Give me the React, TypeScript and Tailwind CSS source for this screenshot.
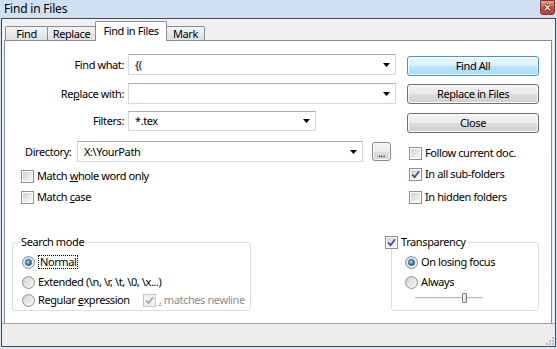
import React from "react";

function Box({ checked, disabled }: { checked?: boolean; disabled?: boolean }) {
  return (
    <div
      className={`w-[13px] h-[13px] shrink-0 border p-[1px] ${
        disabled ? "border-[#c5c5c5] bg-[#f4f4f4]" : "border-[#8e8f8f] bg-white"
      }`}
    >
      <div
        className={`relative w-full h-full ${
          disabled
            ? "bg-[#f0f0f0]"
            : "bg-[linear-gradient(135deg,#cbcfd5_0%,#e6e8eb_55%,#f7f7f7_100%)]"
        }`}
      >
        {checked && (
          <svg viewBox="0 0 9 9" className="absolute inset-0 w-full h-full">
            <path
              d="M1.2 4.6 L3.6 7.2 L8 1.2"
              fill="none"
              stroke={disabled ? "#a8a8a8" : "#3b4d8c"}
              strokeWidth="1.7"
            />
          </svg>
        )}
      </div>
    </div>
  );
}

function Radio({ checked }: { checked?: boolean }) {
  return (
    <div className="w-[13px] h-[13px] shrink-0 rounded-full border border-[#8e8f8f] bg-[linear-gradient(135deg,#cfd2d6,#f8f8f8)] flex items-center justify-center">
      {checked && (
        <div className="w-[7px] h-[7px] rounded-full bg-[radial-gradient(circle_at_35%_35%,#9fe0f8_0%,#3a8ac0_55%,#1b4f7a_100%)] border border-[#1f5380]" />
      )}
    </div>
  );
}

function Combo({ value, w }: { value?: string; w: string }) {
  return (
    <div
      className={`${w} h-full flex items-center justify-between bg-white border border-[#d5d9df] border-t-[#abadb3] pl-[6px] pr-[5px]`}
    >
      <span>{value}</span>
      <svg width="7" height="4" viewBox="0 0 7 4">
        <path d="M0 0 H7 L3.5 4 Z" fill="#000" />
      </svg>
    </div>
  );
}

function Btn({ children, primary }: { children: React.ReactNode; primary?: boolean }) {
  return (
    <div
      className={`w-[132px] h-[20px] rounded-[3px] border flex items-center justify-center shadow-[inset_0_0_0_1px_#fbfbfb] ${
        primary
          ? "border-[#3c98c9] bg-[linear-gradient(#eaf6fd_0%,#d9f0fc_50%,#bee6fd_50%,#a7d9f5_100%)]"
          : "border-[#707070] bg-[linear-gradient(#f2f2f2_0%,#ebebeb_50%,#dddddd_50%,#cfcfcf_100%)]"
      }`}
    >
      {children}
    </div>
  );
}

function Check({
  children,
  checked,
  className = "",
}: {
  children: React.ReactNode;
  checked?: boolean;
  className?: string;
}) {
  return (
    <div className={`h-[16px] flex items-center gap-[3px] whitespace-nowrap ${className}`}>
      <Box checked={checked} />
      <span>{children}</span>
    </div>
  );
}

function Tab({ children, active, w, className = "" }: { children: React.ReactNode; active?: boolean; w: string; className?: string }) {
  return (
    <div
      className={`${w} ${className} flex items-center justify-center border border-[#898c95] rounded-t-[2px] whitespace-nowrap ${
        active
          ? "h-[20px] -mb-[1px] border-b-0 bg-white relative z-10 pb-[1px]"
          : "h-[14px] border-b-0 bg-[linear-gradient(#f3f3f3,#e0e0e0)]"
      }`}
    >
      {children}
    </div>
  );
}

export default function App() {
  return (
    <div className="w-[557px] h-[349px] overflow-hidden bg-[linear-gradient(#d0e0f3,#dae6f5)] font-['Noto_Sans',sans-serif] text-[11px] leading-[14px] tracking-[-0.4px] text-black select-none">
      {/* Title bar */}
      <div className="h-[18px] flex items-start justify-between">
        <span className="pl-[4px] pt-[2px] text-[12px] tracking-[-0.2px]">Find in Files</span>
        <div className="mr-[2px] w-[15px] h-[15px] rounded-b-[3px] border border-[#7a3a30] bg-[linear-gradient(#e6a08f,#c9503b_55%,#b8442f)] flex items-center justify-center">
          <svg width="7" height="7" viewBox="0 0 7 7">
            <path d="M1 1 L6 6 M6 1 L1 6" stroke="#5a1a10" strokeWidth="2.6" />
            <path d="M1 1 L6 6 M6 1 L1 6" stroke="#fff" strokeWidth="1.4" />
          </svg>
        </div>
      </div>

      {/* Client area */}
      <div className="ml-[1px] w-[555px] h-[329px] border border-[#4a4a4a] bg-[#f0f0f0] flex flex-col">
        {/* Tabs */}
        <div className="h-[21px] ml-[2px] pl-[1px] flex items-end">
          <Tab w="w-[43px]">Find</Tab>
          <Tab w="w-[49px]" className="-ml-[1px]">Replace</Tab>
          <Tab w="w-[72px]" active className="-ml-[1px]">Find in Files</Tab>
          <Tab w="w-[39px]" className="-ml-[1px]">Mark</Tab>
        </div>

        {/* Tab page */}
        <div className="ml-[2px] w-[548px] h-[283px] border border-b-0 border-[#898c95] bg-white flex flex-col">
          <div className="flex">
            {/* Left column */}
            <div className="w-[395px] pt-[13px] flex flex-col">
              <div className="h-[21px] flex items-center">
                <span className="w-[119px] text-right mr-[4px]">Find what:</span>
                <Combo value="{(" w="w-[268px]" />
              </div>
              <div className="h-[21px] mt-[8px] flex items-center">
                <span className="w-[119px] text-right mr-[4px]">
                  Re<u>p</u>lace with:
                </span>
                <Combo w="w-[268px]" />
              </div>
              <div className="h-[20px] mt-[7px] flex items-center">
                <span className="w-[119px] text-right mr-[4px]">Filters:</span>
                <Combo value="*.tex" w="w-[188px]" />
              </div>
              <div className="h-[21px] mt-[10px] flex items-center">
                <span className="ml-[20px] w-[52px] whitespace-nowrap">Directory:</span>
                <Combo value="X:\YourPath" w="w-[286px]" />
                <div className="ml-[9px] w-[19px] h-[19px] rounded-[3px] border border-[#8a8a8a] bg-[linear-gradient(#f4f4f4_0%,#ececec_50%,#dedede_50%,#d2d2d2_100%)] shadow-[inset_0_0_0_1px_#fbfbfb] flex items-end justify-center pb-[4px] leading-[6px] text-[10px]">
                  ...
                </div>
              </div>
              <Check className="mt-[6px] ml-[16px]">
                Match <u>w</u>hole word only
              </Check>
              <Check className="mt-[5px] ml-[16px]">
                Match <u>c</u>ase
              </Check>
            </div>

            {/* Right column */}
            <div className="pt-[15px] pl-[7px] flex flex-col">
              <Btn primary>Find All</Btn>
              <div className="mt-[8px]">
                <Btn>Replace in Files</Btn>
              </div>
              <div className="mt-[9px]">
                <Btn>Close</Btn>
              </div>
              <Check className="mt-[12px] ml-[2px]">Follow current doc.</Check>
              <Check className="mt-[5px] ml-[2px]" checked>
                In all sub-folders
              </Check>
              <Check className="mt-[7px] ml-[2px]">In hidden folders</Check>
            </div>
          </div>

          {/* Group boxes */}
          <div className="mt-[30px] flex justify-between items-start whitespace-nowrap">
            <fieldset className="ml-[7px] w-[239px] min-w-0 border border-[#d5dfe5] rounded-[3px] px-[9px] pb-[1px]">
              <legend className="-ml-[2px] px-[1px] leading-[14px]">Search mode</legend>
              <div className="mt-[4px] h-[18px] flex items-center gap-[3px]">
                <Radio checked />
                <span className="border border-dotted border-black px-[1px] leading-[12px]">Normal</span>
              </div>
              <div className="mt-[2px] h-[18px] flex items-center gap-[3px]">
                <Radio />
                <span>Extended (\n, \r, \t, \0, \x...)</span>
              </div>
              <div className="h-[18px] w-[260px] flex items-center gap-[3px]">
                <Radio />
                <span>
                  Regular <u>e</u>xpression
                </span>
                <div className="ml-[10px] flex items-center gap-[3px] text-[#8d8d8d]">
                  <Box checked disabled />
                  <span>
                    <u>.</u> matches newline
                  </span>
                </div>
              </div>
            </fieldset>

            <fieldset className="mr-[12px] w-[148px] min-w-0 border border-[#d5dfe5] rounded-[3px] px-[13px] pb-[7px]">
              <legend className="-ml-[20px] px-0 flex items-center gap-[3px] h-[14px] bg-white pr-[2px]">
                <Box checked />
                <span>Transparency</span>
              </legend>
              <div className="mt-[4px] h-[18px] flex items-center gap-[3px]">
                <Radio checked />
                <span>On losing focus</span>
              </div>
              <div className="mt-[2px] h-[18px] flex items-center gap-[3px]">
                <Radio />
                <span>Always</span>
              </div>
              <div className="mt-[2px] ml-[10px] w-[68px] h-[10px] relative flex items-center">
                <div className="w-full h-[2px] bg-[#b9b9b9] border-b border-[#f0f0f0]" />
                <div className="absolute left-[47px] top-0 w-[5px] h-[10px] border border-[#7a7a7a] bg-[linear-gradient(90deg,#f6f6f6,#dcdcdc)] rounded-[1px]" />
              </div>
            </fieldset>
          </div>
        </div>

        {/* Status bar */}
        <div className="h-[23px] border-t border-[#a0a0a0] bg-[#efedeb] flex justify-end items-end pr-[1px] pb-[1px]">
          <svg width="9" height="9" viewBox="0 0 9 9">
            <g fill="#b8b8b8">
              <rect x="7" y="1" width="2" height="2" />
              <rect x="4" y="4" width="2" height="2" />
              <rect x="7" y="4" width="2" height="2" />
              <rect x="1" y="7" width="2" height="2" />
              <rect x="4" y="7" width="2" height="2" />
              <rect x="7" y="7" width="2" height="2" />
            </g>
          </svg>
        </div>
      </div>
    </div>
  );
}
